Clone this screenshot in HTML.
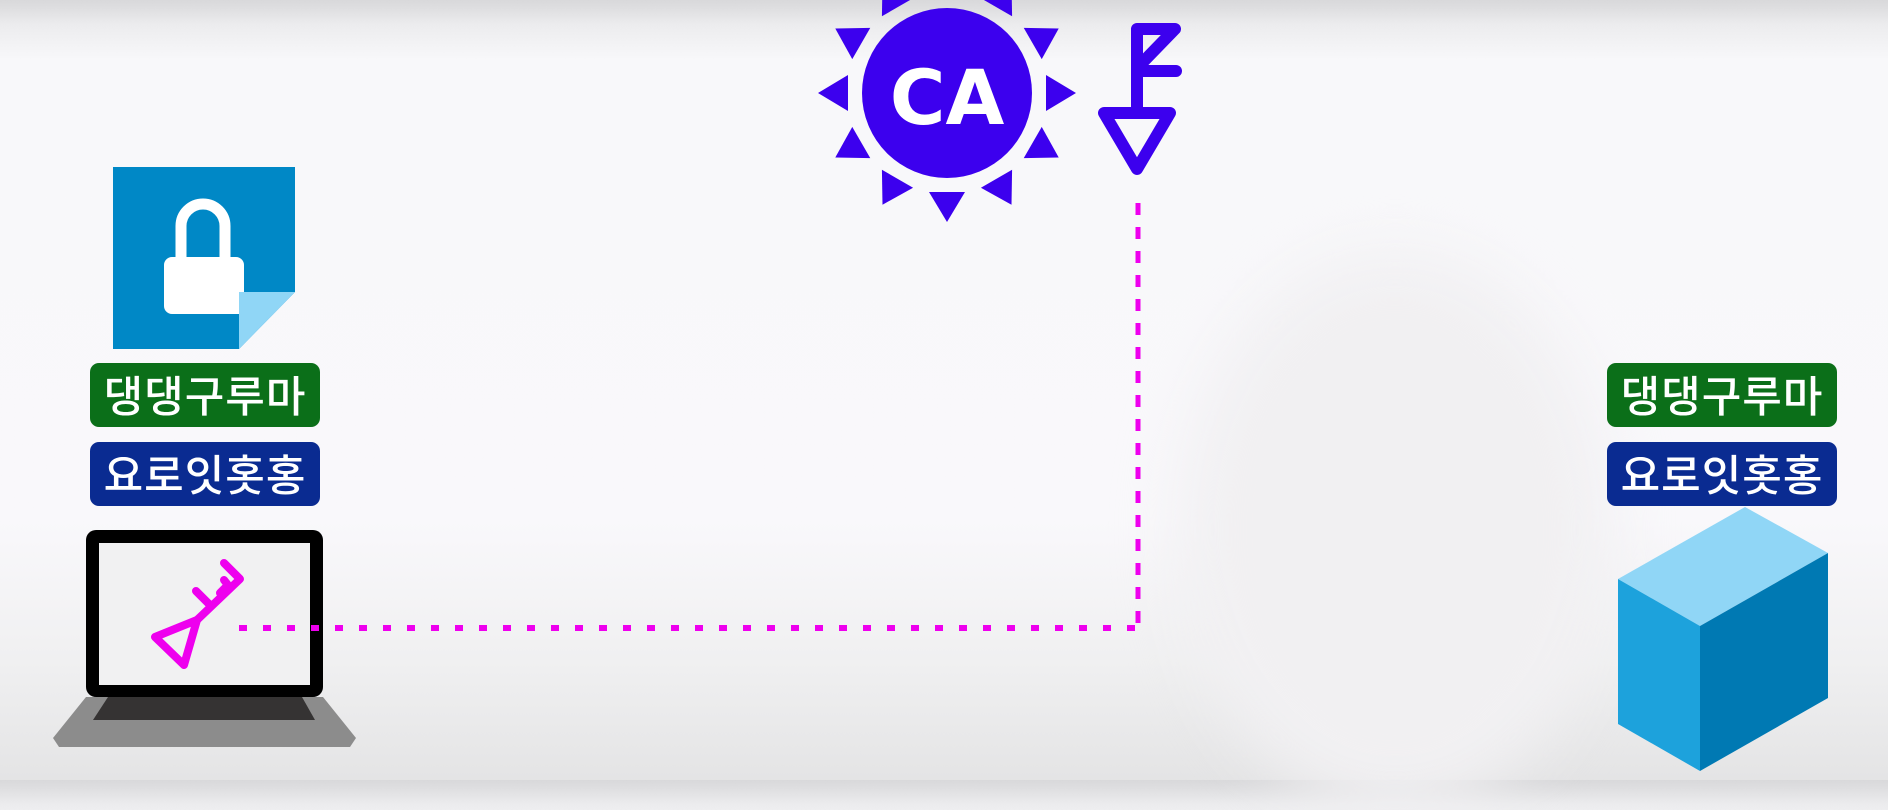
<!DOCTYPE html>
<html><head><meta charset="utf-8"><style>
html,body{margin:0;padding:0}
body{width:1888px;height:780px;overflow:hidden;position:relative;
background:linear-gradient(180deg,#d8d8da 0px,#ececee 25px,#f8f8fa 60px,#f9f8fb 520px,#f0f0f1 660px,#e4e4e5 780px);
font-family:"Liberation Sans","Noto Sans CJK KR",sans-serif}
.blur{position:absolute;border-radius:50%;filter:blur(30px)}
.lbl{position:absolute;width:230px;height:64px;border-radius:9px;color:#fff;font-size:43px;line-height:62px;text-align:center;letter-spacing:1px;font-family:"Noto Sans CJK KR",sans-serif;font-weight:500}
.g{background:#0b6f19}.b{background:#0a2b91}
</style></head><body>
<div class="blur" style="left:1180px;top:250px;width:430px;height:560px;background:#f1f0f2"></div>
<svg width="1888" height="780" style="position:absolute;left:0;top:0">
<polygon points="113,167 295,167 295,292 239,349 113,349" fill="#0088c6"/>
<polygon points="239,292 295,292 239,349" fill="#90d6f6"/>
<path d="M181,260 V226 a22,22 0 0 1 44,0 V260" fill="none" stroke="#fff" stroke-width="11"/>
<path d="M172,257 H236 a8,8 0 0 1 8,8 V292 H239 V314 H172 a8,8 0 0 1 -8,-8 V265 a8,8 0 0 1 8,-8Z" fill="#fff"/>
<polygon points="86,697 323,697 356,738 350,747 59,747 53,738" fill="#8c8c8c"/>
<polygon points="108,697 302,697 315,720 93,720" fill="#353333"/>
<rect x="86" y="530" width="237" height="167" rx="10" fill="#000"/>
<rect x="99" y="543" width="211" height="142" fill="#f1f1f2"/>
<g fill="none" stroke="#ee00ee" stroke-width="8" stroke-linecap="round" stroke-linejoin="round">
<polygon points="155,637 197,620 184,665"/>
<path d="M197,620 L240,579 L224,563 M196,591 L211,606 M220,593 L228,585 L224,580"/>
</g>
<line x1="239" y1="628" x2="1141" y2="628" stroke="#ee00ee" stroke-width="6" stroke-dasharray="8,16"/>
<line x1="1138" y1="203" x2="1138" y2="628" stroke="#ee00ee" stroke-width="5" stroke-dasharray="12,12"/>
<g fill="#3c00ee">
<circle cx="947" cy="93" r="85"/>
<g id="ray"><polygon points="929,192 965,192 947,222"/></g>
<use href="#ray" transform="rotate(30 947 93)"/>
<use href="#ray" transform="rotate(60 947 93)"/>
<use href="#ray" transform="rotate(90 947 93)"/>
<use href="#ray" transform="rotate(120 947 93)"/>
<use href="#ray" transform="rotate(150 947 93)"/>
<use href="#ray" transform="rotate(180 947 93)"/>
<use href="#ray" transform="rotate(210 947 93)"/>
<use href="#ray" transform="rotate(240 947 93)"/>
<use href="#ray" transform="rotate(270 947 93)"/>
<use href="#ray" transform="rotate(300 947 93)"/>
<use href="#ray" transform="rotate(330 947 93)"/>
</g>
<text x="947" y="124" text-anchor="middle" fill="#fff" font-family="DejaVu Sans,sans-serif" font-weight="bold" font-size="76">CA</text>
<g fill="none" stroke="#3c00ee" stroke-width="12" stroke-linecap="round" stroke-linejoin="round">
<path d="M1137,110 V29 H1175 L1143,62 M1143,71 H1176"/>
<polygon points="1104,113 1170,113 1137,169"/>
</g>
<polygon points="1745,507 1828,553 1700,626 1618,579" fill="#90d6f6"/>
<polygon points="1618,579 1700,626 1700,771 1618,724" fill="#1da2dc"/>
<polygon points="1700,626 1828,553 1828,698 1700,771" fill="#0079b3"/>
</svg>
<div class="lbl g" style="left:90px;top:363px">댕댕구루마</div>
<div class="lbl b" style="left:90px;top:442px">요로잇홋홍</div>
<div class="lbl g" style="left:1607px;top:363px">댕댕구루마</div>
<div class="lbl b" style="left:1607px;top:442px">요로잇홋홍</div>
</body></html>
